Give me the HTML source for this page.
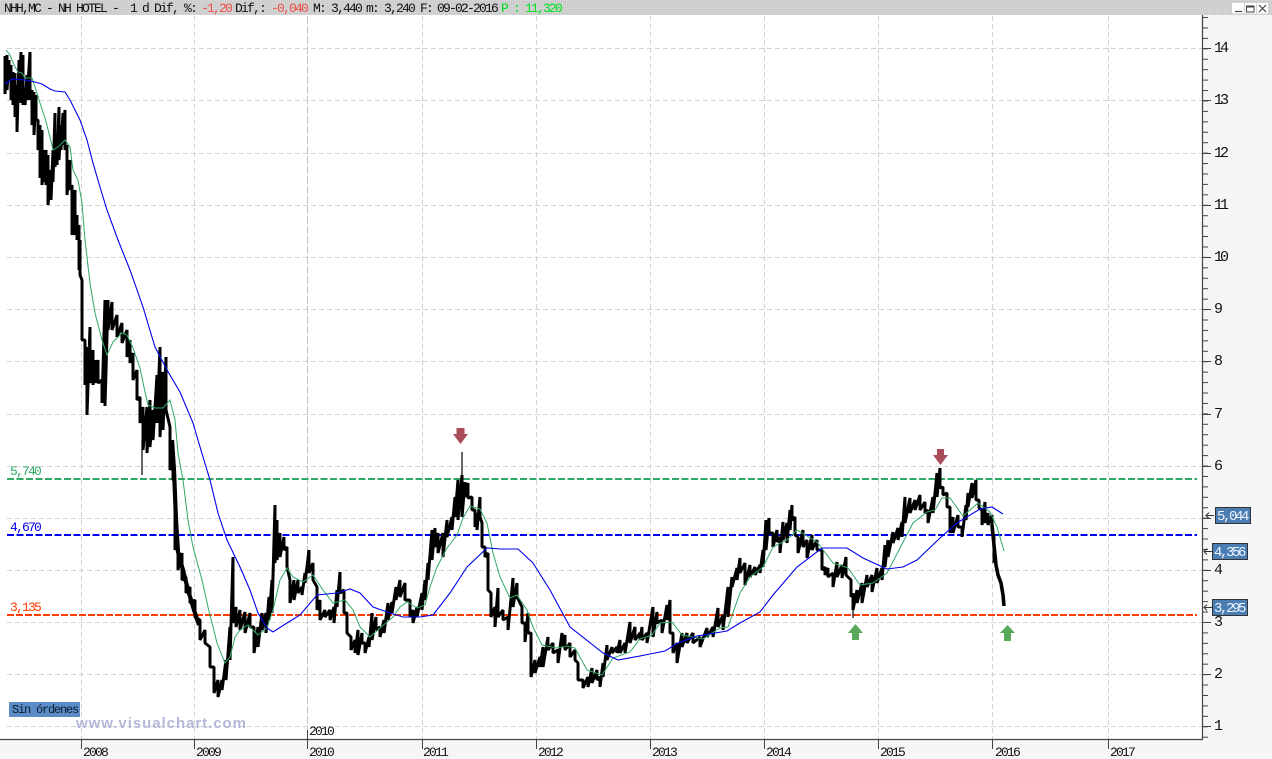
<!DOCTYPE html>
<html><head><meta charset="utf-8"><title>NHH,MC</title>
<style>html,body{margin:0;padding:0;background:#fff;width:1272px;height:759px;overflow:hidden}svg{display:block}text{font-family:"Liberation Mono",monospace;white-space:pre}</style>
</head><body>
<svg xmlns="http://www.w3.org/2000/svg" width="1272" height="759" viewBox="0 0 1272 759">
<defs>
<pattern id="hd" width="2" height="2" patternUnits="userSpaceOnUse"><rect width="2" height="2" fill="#cfcfcf"/><rect width="1" height="1" fill="#d8d6d8"/><rect x="1" y="1" width="1" height="1" fill="#c8cac8"/></pattern>
<pattern id="pn" width="4" height="4" patternUnits="userSpaceOnUse"><rect width="4" height="4" fill="#f8f8f8"/><rect width="1" height="1" fill="#e6f2f4"/><rect x="2" y="1" width="1" height="1" fill="#f8e6f4"/><rect x="1" y="2" width="1" height="1" fill="#f2f2e2"/><rect x="3" y="3" width="1" height="1" fill="#e6eef8"/></pattern>
<pattern id="tk" width="5" height="10.43" patternUnits="userSpaceOnUse" x="1203" y="6.6"><rect y="0" width="5" height="1" fill="#444"/></pattern>
</defs>
<rect width="1272" height="759" fill="#fff"/>
<rect x="0" y="0" width="1272" height="15" fill="url(#hd)"/>
<rect x="1203" y="15" width="69" height="744" fill="url(#pn)"/>
<rect x="0" y="739" width="1203" height="20" fill="url(#pn)"/>

<!-- grid -->
<path d="M7 48.5H1202M7 100.5H1202M7 153.5H1202M7 205.5H1202M7 257.5H1202M7 309.5H1202M7 361.5H1202M7 414.5H1202M7 466.5H1202M7 518.5H1202M7 570.5H1202M7 622.5H1202M7 674.5H1202M7 726.5H1202" stroke="#d2d4d2" stroke-width="1" stroke-dasharray="5 3" fill="none"/>
<path d="M81.5 16V739M194.5 16V739M422.5 16V739M536.5 16V739M650.5 16V739M764.5 16V739M878.5 16V739M992.5 16V739M1108.5 16V739" stroke="#d4d2d6" stroke-width="1" stroke-dasharray="5 3" fill="none"/>
<path d="M307.5 16V739" stroke="#c0c4c0" stroke-width="1" stroke-dasharray="8 2" fill="none"/>

<!-- levels -->
<path d="M7 479H1197" stroke="#2fa866" stroke-width="2" stroke-dasharray="7 2.5" fill="none"/>
<path d="M7 535H1197" stroke="#0000ee" stroke-width="2" stroke-dasharray="7 2.5" fill="none"/>
<path d="M7 615H1197" stroke="#ff3c00" stroke-width="2" stroke-dasharray="7 2" fill="none"/>

<!-- price -->
<polyline fill="none" stroke="#000" stroke-width="3" stroke-linejoin="bevel" points="5,56 5,94 7,55 7,90 9,60 9,80 11,65 11,100 13,72 13,105 15,73 15,117 17,85 17,132 19,60 19,100 21,52 21,103 23,55 23,105 25,88 25,105 27,75 27,100 30,52 30,100 32,90 32,125 34,92 34,135 36,95 36,120 38,120 38,150 40,125 40,178 42,130 42,185 44,150 44,182 46,150 46,185 48,155 48,205 51,170 51,200 53,150 53,182 55,113 55,167 57,135 57,165 59,107 59,160 61,125 61,150 63,113 63,145 65,110 65,150 67,145 67,195 70,160 70,190 72,185 72,235 75,190 75,235 77,215 77,240 79,225 79,270 80,240 80,275 82,280 82,340 85,340 85,385 87,347 87,415 90,327 90,383 93,350 93,385 95,360 95,383 98,360 98,383 102,380 102,403 105,300 105,406 108,300 108,330 112,302 112,330 117,315 117,337 122,323 122,343 127,330 127,357 130,340 130,363 133,353 133,380 137,370 137,400 140,397 140,423 143,407 143,450 147,407 147,453 150,400 150,447 153,410 153,440 157,375 157,423 160,347 160,437 163,372 163,430 166,357 166,410 170,427 170,470 173,463 173,480 175,480 175,550 178,540 178,570 182,553 182,580 186,577 186,593 190,587 190,603 195,600 195,617 200,620 200,640 205,630 205,643 210,647 210,667 214,667 214,693 218,680 218,697 222,680 222,690 226,660 226,680 230,627 230,660 233,557 233,623 236,607 236,627 240,610 240,630 245,612 245,633 250,613 250,627 254,627 254,653 258,627 258,647 262,613 262,630 266,613 266,633 269,597 269,620 272,580 272,613 275,505 275,563 277,520 277,560 280,533 280,557 284,537 284,550 287,547 287,567 290,580 290,603 294,580 294,600 298,580 298,593 302,587 302,595 305,573 305,583 309,550 309,573 313,563 313,580 317,587 317,610 320,600 320,620 325,610 325,617 330,610 330,620 334,607 334,623 337,590 337,607 340,572 340,593 344,590 344,613 347,613 347,633 351,637 351,650 355,640 355,653 358,630 358,655 362,633 362,643 365,643 365,653 369,637 369,647 372,613 372,640 376,617 376,630 380,627 380,637 384,620 384,633 388,603 388,620 392,602 392,613 396,587 396,600 400,580 400,597 405,583 405,600 410,600 410,617 413,610 413,623 417,607 417,617 422,593 422,610 425,580 425,600 428,563 428,580 432,530 432,560 435,528 435,547 438,533 438,553 443,533 443,557 447,520 447,537 452,517 452,530 455,497 455,517 458,480 458,520 462,475 462,517 465,482 465,497 468,483 468,498 472,497 472,510 475,510 475,527 477,513 477,530 480,497 480,517 482,523 482,547 485,547 485,557 488,553 488,590 491,593 491,617 495,607 495,627 498,588 498,617 503,610 503,620 508,617 508,630 513,578 513,607 517,583 517,597 522,607 522,623 525,623 525,642 528,613 528,633 531,633 531,677 535,660 535,673 540,657 540,667 543,647 543,667 548,637 548,650 553,643 553,653 558,650 558,663 562,633 562,647 565,635 565,650 570,643 570,657 575,650 575,660 578,663 578,680 583,680 583,688 588,677 588,687 592,668 592,683 597,670 597,680 600,677 600,687 603,663 603,677 607,645 607,660 612,647 612,653 617,647 617,653 620,640 620,653 625,643 625,653 630,622 630,643 635,627 635,640 640,633 640,640 642,627 642,640 647,633 647,643 653,607 653,637 657,612 657,623 662,620 662,633 667,605 667,620 670,600 670,633 673,633 673,653 677,643 677,663 682,633 682,647 687,633 687,643 693,633 693,643 700,637 700,647 707,628 707,637 713,627 713,637 718,608 718,627 723,615 723,630 728,587 728,617 732,577 732,587 737,568 737,580 740,558 740,573 745,563 745,585 750,565 750,577 755,567 755,575 760,565 760,573 763,550 763,567 766,520 766,550 769,518 769,533 773,533 773,547 777,530 777,542 780,537 780,553 783,522 783,540 787,523 787,543 790,510 790,530 792,505 792,520 795,517 795,535 798,537 798,553 803,530 803,547 807,540 807,558 812,535 812,550 817,540 817,550 822,550 822,570 825,567 825,575 828,568 828,577 833,573 833,587 837,562 837,577 842,565 842,578 846,557 846,575 851,580 851,597 853,593 853,610 857,590 857,603 862,583 862,603 867,575 867,587 872,575 872,592 877,568 877,583 882,568 882,580 885,545 885,567 888,540 888,557 893,532 893,543 898,528 898,540 902,522 902,537 905,497 905,523 910,498 910,513 915,500 915,510 920,495 920,510 925,502 925,513 928,510 928,523 933,497 933,513 937,473 937,497 940,468 940,488 943,487 943,495 947,493 947,507 950,507 950,533 953,517 953,533 958,515 958,527 962,527 962,537 966,505 966,520 968,493 968,507 972,483 972,498 976,480 976,500 979,500 979,508 982,510 982,525 985,502 985,523 988,513 988,525 992,515 992,530 994,537 994,563"/>
<!-- thin wicks and solid runs -->
<path d="M462 452V480M853 605V618M142 440V475" stroke="#000" stroke-width="1.2" fill="none"/>
<polyline fill="none" stroke="#000" stroke-width="3.6" stroke-linejoin="round" points="992,525 994,545 996,565 998,575 1001,583 1003,595 1004,606"/>
<polyline fill="none" stroke="#000" stroke-width="4.2" stroke-linejoin="round" points="172,440 174,470 176,520 178,552 183,570 188,590 194,610 199,625"/>

<!-- green MA -->
<polyline fill="none" stroke="#2fa866" stroke-width="1" points="6,50 10,55 15,67 18,72 22,73 25,78 32,78 35,87 40,103 45,118 50,137 53,150 58,147 65,140 70,147 73,170 78,180 82,203 85,240 90,283 95,313 102,340 107,355 113,342 122,333 127,335 133,348 140,368 145,392 148,405 155,408 163,408 170,400 175,420 178,453 183,480 188,520 193,547 202,580 208,607 217,643 225,663 230,657 235,637 240,630 248,625 258,635 267,628 273,610 280,580 287,568 293,577 303,582 313,575 323,590 333,603 345,600 353,610 360,627 370,637 380,628 393,617 400,607 407,602 417,608 425,605 430,587 437,567 447,548 457,535 463,518 470,506 480,509 487,523 493,553 500,577 510,598 517,595 527,610 533,627 542,645 557,648 567,646 575,648 587,670 602,675 613,658 630,652 640,639 652,635 660,623 672,622 682,635 703,639 720,628 728,627 740,593 750,577 763,567 773,547 787,540 797,530 817,542 833,563 848,568 860,585 873,583 887,573 900,548 913,523 927,512 935,510 942,498 950,498 963,516 978,503 990,512 997,527 1004,551"/>

<!-- blue MA -->
<polyline fill="none" stroke="#0000ee" stroke-width="1.1" points="5,84 12,79 25,80 35,82 42,84 50,89 55,91 65,92 70,100 80,120 87,140 93,163 100,187 107,210 118,240 130,270 143,307 155,347 167,370 180,392 193,423 203,457 210,480 218,513 227,540 240,567 250,590 258,613 267,628 273,632 287,623 300,615 317,595 337,593 350,589 360,593 373,607 390,613 403,617 420,617 433,615 450,593 467,567 487,548 500,549 518,549 533,563 550,590 570,627 603,653 618,660 640,656 665,651 678,643 697,636 727,631 740,623 760,612 773,595 797,567 822,548 847,548 863,558 887,569 903,567 917,560 940,538 957,523 980,509 992,507 1003,514"/>

<!-- arrows -->
<polygon fill="#a94c5a" points="456.5,428 464.5,428 464.5,434 468,434 460.5,444 453,434 456.5,434"/>
<polygon fill="#a94c5a" points="937,449 944,449 944,455 948,455 940.5,465 933,455 937,455"/>
<polygon fill="#58a85a" points="852,640 859,640 859,633 863,633 855.5,624 848,633 852,633"/>
<polygon fill="#58a85a" points="1004,641 1011,641 1011,633 1015,633 1007.5,625 1000,633 1004,633"/>

<!-- level labels -->
<g font-size="13" letter-spacing="-1.8">
<text x="10" y="475" fill="#2fa866">5,740</text>
<text x="10" y="531" fill="#0000ee">4,670</text>
<text x="10" y="611" fill="#ff3c00">3,135</text>
</g>

<!-- axes -->
<rect x="1203" y="17" width="5" height="722" fill="url(#tk)"/>
<path d="M1202.5 15V739M0 739.5H1203" stroke="#444" stroke-width="1.2" fill="none"/>
<path d="M1203 48.5h8M1203 100.5h8M1203 153.5h8M1203 205.5h8M1203 257.5h8M1203 309.5h8M1203 361.5h8M1203 414.5h8M1203 466.5h8M1203 518.5h8M1203 570.5h8M1203 622.5h8M1203 674.5h8M1203 726.5h8" stroke="#444" fill="none"/>
<path d="M81.5 739v10M194.5 739v10M307.5 730v19M422.5 739v10M536.5 739v10M650.5 739v10M764.5 739v10M878.5 739v10M992.5 739v10M1108.5 739v10" stroke="#444" fill="none"/>

<g font-size="15" letter-spacing="-3" fill="#111">
<text x="1214" y="52">14</text><text x="1214" y="104">13</text><text x="1214" y="157">12</text><text x="1214" y="209">11</text><text x="1214" y="261">10</text>
</g>
<g font-size="15" fill="#111">
<text x="1214" y="313">9</text><text x="1214" y="365">8</text><text x="1214" y="418">7</text><text x="1214" y="470">6</text><text x="1214" y="574">4</text><text x="1214" y="626">3</text><text x="1214" y="678">2</text><text x="1214" y="730">1</text>
</g>
<g font-size="13" letter-spacing="-1.8" fill="#111">
<text x="83" y="756">2008</text><text x="196" y="756">2009</text><text x="309" y="756">2010</text><text x="423" y="756">2011</text><text x="538" y="756">2012</text><text x="652" y="756">2013</text><text x="766" y="756">2014</text><text x="880" y="756">2015</text><text x="995" y="756">2016</text><text x="1110" y="756">2017</text>
<text x="309" y="735">2010</text>
</g>

<!-- price tags -->
<g stroke="#333" stroke-width="1" fill="#4a7db2">
<rect x="1215.5" y="507.5" width="35" height="16"/>
<rect x="1212.5" y="543.5" width="35" height="16"/>
<rect x="1212.5" y="599.5" width="35" height="16"/>
</g>
<path d="M1214 515.5h-8m3-3l-3 3 3 3M1212 551.5h-8m3-3l-3 3 3 3M1212 607.5h-8m3-3l-3 3 3 3" stroke="#333" fill="none"/>
<g font-size="14" letter-spacing="-2.4" fill="#eef4ff">
<text x="1217" y="520">5,044</text>
<text x="1214" y="556">4,356</text>
<text x="1214" y="612">3,295</text>
</g>

<!-- orders and watermark -->
<rect x="9" y="702" width="71" height="15" fill="#5b8cc6"/>
<text x="12" y="713" font-size="12" letter-spacing="-1.2" fill="#0a1a30">Sin órdenes</text>
<text x="76" y="728" style="font-family:'Liberation Sans',sans-serif" font-size="15" font-weight="bold" fill="#b3b8d8" textLength="170" lengthAdjust="spacing">www.visualchart.com</text>

<!-- header -->
<g font-size="13" letter-spacing="-1.8" fill="#111">
<text x="4" y="12">NHH,MC - NH HOTEL -  1 d Dif, %:</text>
<text x="201" y="12" fill="#f0504a">-1,20</text>
<text x="235" y="12">Dif,:</text>
<text x="271" y="12" fill="#f0504a">-0,040</text>
<text x="313" y="12">M: 3,440</text>
<text x="366" y="12">m: 3,240</text>
<text x="420" y="12">F:</text>
<text x="437" y="12">09-02-2016</text>
<text x="501" y="12" fill="#00e020">P : 11,320</text>
</g>

<!-- window buttons -->
<rect x="1232" y="3" width="12" height="10.5" fill="#fff"/>
<rect x="1245" y="3" width="11" height="10.5" fill="#fff"/>
<rect x="1257" y="3" width="11" height="10.5" fill="#fff"/>
<path d="M1235 11.5h7" stroke="#444" stroke-width="1.2" fill="none"/>
<rect x="1246.5" y="6" width="7.5" height="6" fill="none" stroke="#444" stroke-width="1"/>
<path d="M1246.5 6.5h7.5" stroke="#444" stroke-width="2" fill="none"/>
<path d="M1259 5l7 7M1266 5l-7 7" stroke="#444" stroke-width="1.2" fill="none"/>
</svg>
</body></html>
